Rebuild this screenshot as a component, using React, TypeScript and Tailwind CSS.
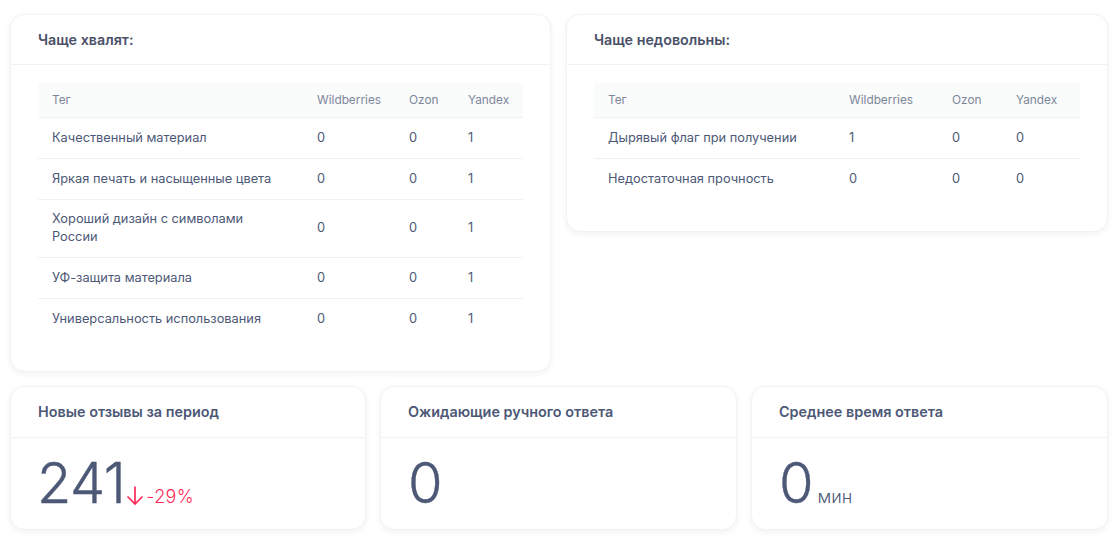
import React from 'react';

interface TagRow {
  tag: string;
  wb: number;
  ozon: number;
  yandex: number;
}

const praised: TagRow[] = [
  { tag: 'Качественный материал', wb: 0, ozon: 0, yandex: 1 },
  { tag: 'Яркая печать и насыщенные цвета', wb: 0, ozon: 0, yandex: 1 },
  { tag: 'Хороший дизайн с символами России', wb: 0, ozon: 0, yandex: 1 },
  { tag: 'УФ-защита материала', wb: 0, ozon: 0, yandex: 1 },
  { tag: 'Универсальность использования', wb: 0, ozon: 0, yandex: 1 },
];

const complaints: TagRow[] = [
  { tag: 'Дырявый флаг при получении', wb: 1, ozon: 0, yandex: 0 },
  { tag: 'Недостаточная прочность', wb: 0, ozon: 0, yandex: 0 },
];

const cardClass = 'bg-white rounded-[14px] border border-[#f1f2f3] shadow-[0_2px_6px_rgba(30,40,70,0.06)]';
const bigNumber = 'text-[56px] leading-[60px] font-light [-webkit-text-stroke:0.4px_#4c5876]';

const TagTable = ({ rows, widths }: { rows: TagRow[]; widths: number[] }) => (
  <table className="w-full table-fixed border-collapse text-left text-[12.8px] text-[#4c5876]">
    <colgroup>
      {widths.map((w, i) => (
        <col key={i} style={{ width: w }} />
      ))}
    </colgroup>
    <thead className="bg-[#fafbfb] text-[11.84px] text-[#7d879c]">
      <tr className="h-[34px] border-b border-[#eff1f2]">
        <th className="pl-[14px] pt-[2px] font-normal">Тег</th>
        <th className="pl-[14px] pt-[2px] font-normal">Wildberries</th>
        <th className="pl-[14px] pt-[2px] font-normal">Ozon</th>
        <th className="pl-[14px] pt-[2px] font-normal">Yandex</th>
      </tr>
    </thead>
    <tbody>
      {rows.map((row, i) => (
        <tr key={row.tag} className={`h-[41px] ${i < rows.length - 1 ? 'border-b border-[#eff1f2]' : ''}`}>
          <td className="pl-[14px] pr-[14px] py-[10.5px] leading-[18px]">{row.tag}</td>
          <td className="pl-[14px]">{row.wb}</td>
          <td className="pl-[14px]">{row.ozon}</td>
          <td className="pl-[14px]">{row.yandex}</td>
        </tr>
      ))}
    </tbody>
  </table>
);

const TagCard = ({ title, rows, widths, className }: { title: string; rows: TagRow[]; widths: number[]; className: string }) => (
  <div className={`${cardClass} ${className}`}>
    <div className="h-[50px] flex items-center px-[27px] border-b border-[#f1f2f3] text-[14.3px] font-semibold text-[#4a5068]">
      {title}
    </div>
    <div className="pt-[18px] px-[27px]">
      <TagTable rows={rows} widths={widths} />
    </div>
  </div>
);

const StatCard = ({ title, children, className }: { title: string; children: React.ReactNode; className: string }) => (
  <div className={`${cardClass} ${className}`}>
    <div className="h-[51px] flex items-center px-[27px] border-b border-[#f1f2f3] text-[14.4px] font-semibold text-[#4c5876]">
      {title}
    </div>
    <div className="h-[91px] px-[27px] flex items-end pb-[16px] text-[#4c5876]">{children}</div>
  </div>
);

export default function App() {
  return (
    <div className="w-[1119px] h-[542px] bg-white pl-[10px] pt-[14px] overflow-hidden font-['Inter',sans-serif]">
      <div className="flex items-start gap-[15px]">
        <TagCard title="Чаще хвалят:" rows={praised} widths={[265, 92, 59, 69]} className="w-[541px] h-[358px]" />
        <TagCard title="Чаще недовольны:" rows={complaints} widths={[241, 103, 64, 78]} className="w-[542px] h-[218px]" />
      </div>
      <div className="flex gap-[14px] mt-[14px]">
        <StatCard title="Новые отзывы за период" className="w-[356px]">
          <span className={`-ml-[1px] tracking-[-0.5px] ${bigNumber}`}>241</span>
          <span className="flex items-end text-[#fb2a58] text-[18px] leading-[24px] font-light tracking-[0.3px] mb-[4px]">
            <svg width="20" height="21" viewBox="0 0 20 21" fill="none" stroke="currentColor" strokeWidth="1.7" className="mb-[3px] mr-[1px]">
              <path d="M10 1.5V19M2.5 11.5L10 19L17.5 11.5" />
            </svg>
            -29%
          </span>
        </StatCard>
        <StatCard title="Ожидающие ручного ответа" className="w-[357px]">
          <span className={bigNumber}>0</span>
        </StatCard>
        <StatCard title="Среднее время ответа" className="w-[357px]">
          <span className={bigNumber}>0</span>
          <span className="ml-[4px] text-[18px] leading-[24px] font-light mb-[4px]">мин</span>
        </StatCard>
      </div>
    </div>
  );
}
